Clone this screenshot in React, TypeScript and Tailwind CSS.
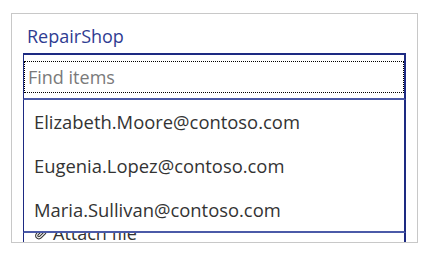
import React from "react";
import { Paperclip } from "lucide-react";

const items = [
  "Elizabeth.Moore@contoso.com",
  "Eugenia.Lopez@contoso.com",
  "Maria.Sullivan@contoso.com",
];

export default function App() {
  return (
    <div
      className="w-[431px] h-[255px] bg-white pt-[13px] pl-[11px]"
      style={{ fontFamily: '"Open Sans", "Noto Sans", sans-serif' }}
    >
      {/* form card */}
      <div className="relative w-[407px] h-[230px] border border-[#c8c8c8] overflow-hidden">
        {/* field label */}
        <div className="mt-[10px] mb-[5px] pl-[15px] h-[24px] leading-[24px] text-[18px] text-[#2f3c92]">
          RepairShop
        </div>

        {/* combo box input */}
        <div className="ml-[11px] w-[383px] h-[47px] border-t-2 border-l border-r-2 border-b-2 border-t-[#1d2a82] border-l-[#1d2a82] border-r-[#1d2a82] border-b-[#4b5aa8] pt-[6px]">
          <div className="h-[32px] border border-dotted border-black pl-[3px] flex items-center text-[18px] text-[#7a7a7a]">
            Find items
          </div>
        </div>

        {/* attachments control (behind the open list) */}
        <div className="ml-[11px] mt-[60px] w-[383px] h-[120px] border-l border-r-2 border-[#1d2a82] pt-[61px]">
          <div className="flex items-center gap-[6px] pl-[10px] text-[18px] text-[#333333] leading-[24px]">
            <Paperclip className="w-[13px] h-[13px]" strokeWidth={2} />
            <span>Attach file</span>
          </div>
        </div>

        {/* open dropdown list */}
        <div className="absolute left-[11px] top-[86px] w-[383px] bg-white border-l border-r-2 border-b-2 border-l-[#1d2a82] border-r-[#1d2a82] border-b-[#4b5aa8]">
          {items.map((it, i) => (
            <div
              key={it}
              className={
                i === 2
                  ? "h-[43px] flex items-center pl-[10px] text-[18.4px] text-[#333333]"
                  : "h-[44px] flex items-center pl-[10px] text-[18.4px] text-[#333333]"
              }
            >
              {it}
            </div>
          ))}
        </div>
      </div>
    </div>
  );
}
